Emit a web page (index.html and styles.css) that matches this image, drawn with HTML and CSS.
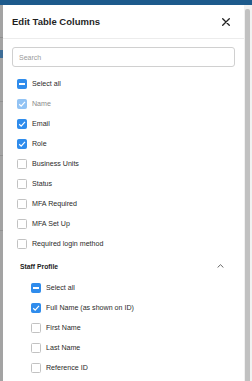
FILE: index.html
```html
<!DOCTYPE html>
<html>
<head>
<meta charset="utf-8">
<link rel="stylesheet" href="styles.css">
</head>
<body>
<div class="page">
  <div class="topbar"></div>
  <div class="main">
    <div class="strip"></div>
    <div class="panel">
      <div class="header">
        <div class="title">Edit Table Columns</div>
        <svg class="close" width="8" height="8" viewBox="0 0 8 8"><path d="M0.7 0.7L7.3 7.3M7.3 0.7L0.7 7.3" stroke="#222" stroke-width="1.3" stroke-linecap="round"/></svg>
      </div>
      <div class="search"><span class="placeholder">Search</span></div>
      <div class="list">
        <div class="row"><span class="cb on ind"><i class="bar"></i></span><span class="lbl">Select all</span></div>
        <div class="row"><span class="cb dis"><svg width="8" height="8" viewBox="0 0 8 8"><path d="M1.2 4.2L3.2 6.1L7 1.9" fill="none" stroke="#fff" stroke-width="1.2"/></svg></span><span class="lbl grey">Name</span></div>
        <div class="row"><span class="cb on"><svg width="8" height="8" viewBox="0 0 8 8"><path d="M1.2 4.2L3.2 6.1L7 1.9" fill="none" stroke="#fff" stroke-width="1.2"/></svg></span><span class="lbl">Email</span></div>
        <div class="row"><span class="cb on"><svg width="8" height="8" viewBox="0 0 8 8"><path d="M1.2 4.2L3.2 6.1L7 1.9" fill="none" stroke="#fff" stroke-width="1.2"/></svg></span><span class="lbl">Role</span></div>
        <div class="row"><span class="cb"></span><span class="lbl">Business Units</span></div>
        <div class="row"><span class="cb"></span><span class="lbl">Status</span></div>
        <div class="row"><span class="cb"></span><span class="lbl">MFA Required</span></div>
        <div class="row"><span class="cb"></span><span class="lbl">MFA Set Up</span></div>
        <div class="row"><span class="cb"></span><span class="lbl">Required login method</span></div>
        <div class="section">
          <span class="sec-title">Staff Profile</span>
          <svg class="chev" width="7" height="4" viewBox="0 0 7 4"><path d="M0.6 3.5L3.5 0.7L6.4 3.5" fill="none" stroke="#555" stroke-width="0.9"/></svg>
        </div>
        <div class="row sub"><span class="cb on ind"><i class="bar"></i></span><span class="lbl">Select all</span></div>
        <div class="row sub"><span class="cb on"><svg width="8" height="8" viewBox="0 0 8 8"><path d="M1.2 4.2L3.2 6.1L7 1.9" fill="none" stroke="#fff" stroke-width="1.2"/></svg></span><span class="lbl">Full Name (as shown on ID)</span></div>
        <div class="row sub"><span class="cb"></span><span class="lbl">First Name</span></div>
        <div class="row sub"><span class="cb"></span><span class="lbl">Last Name</span></div>
        <div class="row sub"><span class="cb"></span><span class="lbl">Reference ID</span></div>
      </div>
    </div>
    <div class="scroll"><div class="thumb"></div></div>
  </div>
</div>
</body>
</html>
```
FILE: styles.css
```css
html, body {
  margin: 0;
  padding: 0;
  height: 100%;
  overflow: hidden;
}
body {
  font-family: "Liberation Sans", Arial, sans-serif;
  background: #9e9e9e;
}
.page {
  display: flex;
  flex-direction: column;
  height: 100%;
}
.topbar {
  height: 5px;
  flex: none;
  background: #1d5a8c;
}
.main {
  flex: 1;
  display: flex;
  min-height: 0;
}
.strip {
  width: 3px;
  flex: none;
  background: linear-gradient(to bottom,
    #a3a3a3 0, #a3a3a3 32px, #8f8f8f 32px, #8f8f8f 33px,
    #a3a3a3 33px, #a3a3a3 45px, #3f6d96 45px, #3f6d96 53px,
    #a3a3a3 53px, #a3a3a3 96px, #929292 96px, #929292 97px,
    #a3a3a3 97px, #a3a3a3 150px, #929292 150px, #929292 151px,
    #a3a3a3 151px, #a3a3a3 225px, #929292 225px, #929292 226px,
    #a3a3a3 226px);
}
.panel {
  flex: 1;
  background: #fff;
  display: flex;
  flex-direction: column;
  overflow: hidden;
}
.header {
  height: 33px;
  flex: none;
  display: flex;
  align-items: center;
  justify-content: space-between;
  padding: 0 14px 0 9px;
  border-bottom: 1px solid #ececec;
}
.title {
  font-size: 9.5px;
  font-weight: bold;
  color: #1f1f1f;
}
.close {
  display: block;
}
.search {
  margin: 8px 9px 0 9px;
  height: 18px;
  border: 1px solid #d0d0d0;
  border-radius: 3px;
  display: flex;
  align-items: center;
  padding-left: 6px;
  flex: none;
}
.placeholder {
  font-size: 7px;
  color: #9a9a9a;
}
.list {
  margin-top: 7px;
  display: flex;
  flex-direction: column;
}
.row {
  height: 20px;
  display: flex;
  align-items: center;
  padding-left: 14px;
}
.row.sub {
  padding-left: 28px;
}
.cb {
  width: 10px;
  height: 10px;
  box-sizing: border-box;
  border: 1px solid #c2c2c2;
  border-radius: 1.5px;
  background: #fff;
  display: flex;
  align-items: center;
  justify-content: center;
  flex: none;
}
.cb.on {
  background: #2f8cec;
  border-color: #2f8cec;
}
.cb.dis {
  background: #92c3f4;
  border-color: #92c3f4;
}
.cb svg {
  display: block;
}
.bar {
  display: block;
  width: 6px;
  height: 1.4px;
  background: #fff;
}
.lbl {
  margin-left: 5px;
  font-size: 7.1px;
  color: #2a2a2a;
}
.lbl.grey {
  color: #8a8a8a;
}
.section {
  height: 24px;
  display: flex;
  align-items: center;
  justify-content: space-between;
  padding: 0 20px 0 17px;
}
.sec-title {
  font-size: 6.8px;
  font-weight: bold;
  color: #222;
}
.chev {
  display: block;
}
.scroll {
  width: 8px;
  flex: none;
  background: #f1f1f1;
  padding-top: 4px;
  box-sizing: border-box;
}
.thumb {
  margin-left: 1px;
  width: 5px;
  height: 100%;
  background: #c1c1c1;
  border-radius: 2px 2px 0 0;
}
```
